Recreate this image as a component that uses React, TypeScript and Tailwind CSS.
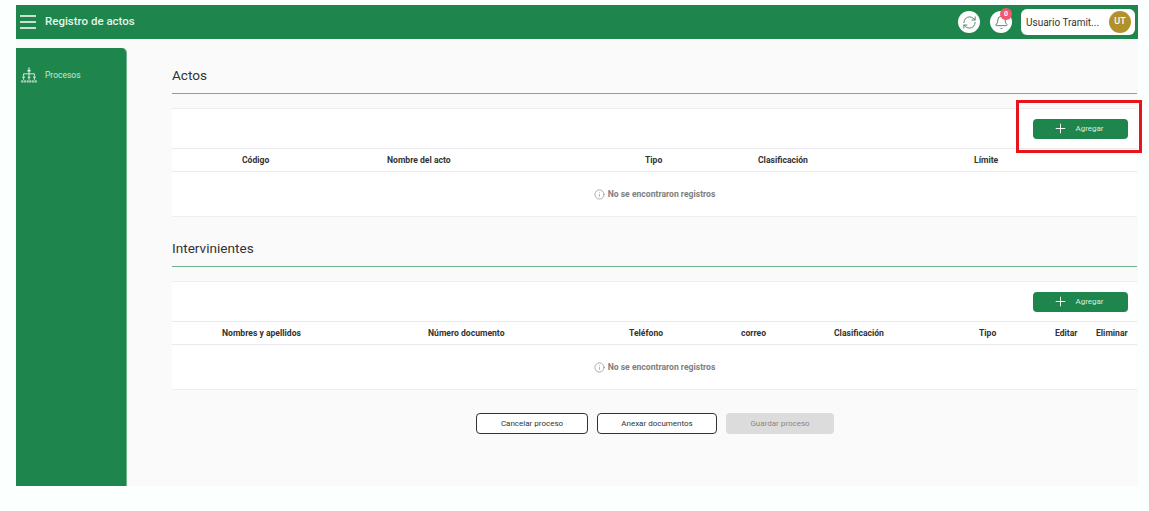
import { Bell, Info, Plus, RefreshCw } from 'lucide-react';

const actosCols = ['Código', 'Nombre del acto', 'Tipo', 'Clasificación', 'Límite'];
const intervCols = ['Nombres y apellidos', 'Número documento', 'Teléfono', 'correo', 'Clasificación', 'Tipo', 'Editar', 'Eliminar'];

function ProcessIcon() {
  return (
    <svg width="16" height="16" viewBox="0 0 16 16" fill="none" stroke="white" strokeWidth="0.8">
      <path d="M8 0.5v1.6" strokeWidth="1" />
      <path d="M6.6 2.6h2.8v2H6.6z" fill="white" stroke="none" />
      <path d="M8 4.6v2.2M2.6 9V6.8h10.8V9M8 6.8V9" />
      <path d="M1.4 9.4h2.4v1.4H1.4zM6.8 9.4h2.4v1.4H6.8zM12.2 9.4h2.4v1.4h-2.4z" fill="white" stroke="none" />
      <path d="M2.6 10.8v2M8 10.8v2M13.4 10.8v2" />
      <path d="M0.6 15.2v-1.5h1.4v1.5zM3.2 15.2v-1.5h1.4v1.5zM6 15.2v-1.5h1.4v1.5zM8.6 15.2v-1.5H10v1.5zM11.4 15.2v-1.5h1.4v1.5zM14 15.2v-1.5h1.4v1.5z" strokeWidth="0.6" />
    </svg>
  );
}

function HamburgerIcon() {
  return (
    <svg width="16" height="14" viewBox="0 0 16 14" stroke="white" strokeWidth="1.4" fill="none">
      <path d="M0 1h16M0 7h16M0 13h16" />
    </svg>
  );
}

function DataCard({ columns, gridClass }: { columns: string[]; gridClass: string }) {
  return (
    <div className="bg-white border-y border-[#eeeeee]">
      <div className="h-[39px] flex items-center justify-end pr-[9px]">
        <button className="w-[95px] h-[20px] rounded-[4px] bg-[#1e864c] flex items-center justify-center gap-[7px] pr-[4px] text-[8px]">
          <Plus className="w-[15px] h-[15px] text-white" strokeWidth={1.5} />
          <span className="text-[#d5eee0]">Agregar</span>
        </button>
      </div>
      <div className={`h-[24px] border-y border-[#e8e8ee] grid items-center text-[8.6px] font-bold text-[#333333] ${gridClass}`}>
        {columns.map((col) => (
          <span key={col}>{col}</span>
        ))}
      </div>
      <div className="h-[44px] flex items-center justify-center gap-[3px] text-[8.6px] font-bold text-[#808080]">
        <Info className="w-[11px] h-[11px] text-[#777777]" strokeWidth={1.25} />
        <span>No se encontraron registros</span>
      </div>
    </div>
  );
}

export default function App() {
  return (
    <div className="relative h-[511px] w-[1149px] overflow-hidden bg-[#fbfffe] pt-[5px] pl-[16px] font-['Roboto',sans-serif]">
      <div className="w-[1122px] h-[481px] flex flex-col">
        {/* Header */}
        <header className="h-[34px] shrink-0 bg-[#1e864c] flex items-center pl-[4px] pr-[3px]">
          <HamburgerIcon />
          <span className="ml-[9px] text-[11.5px] font-medium text-[#e3f5ea]">Registro de actos</span>
          <div className="ml-auto flex items-center">
            <div className="w-[22px] h-[22px] rounded-full bg-white flex items-center justify-center">
              <RefreshCw className="w-[15px] h-[15px] text-[#4f7f62]" strokeWidth={1.5} />
            </div>
            <div className="relative ml-[10px] w-[22px] h-[22px] rounded-full bg-white flex items-center justify-center">
              <Bell className="w-[15px] h-[15px] text-[#4f7f62]" strokeWidth={1.5} />
              <span className="absolute -top-[3px] right-0 w-[12px] h-[12px] rounded-full bg-[#f2596b] text-white text-[7px] font-bold leading-[12px] text-center">0</span>
            </div>
            <div className="ml-[9px] w-[114px] h-[26px] rounded-[6px] bg-white flex items-center justify-between pl-[5px] pr-[4px]">
              <span className="text-[10px] text-[#333333] whitespace-nowrap">Usuario Tramit...</span>
              <span className="w-[22px] h-[22px] rounded-full bg-[#b0912c] text-white text-[9px] font-medium flex items-center justify-center">UT</span>
            </div>
          </div>
        </header>

        <div className="flex-1 flex bg-[#fafafa] min-h-0">
          {/* Sidebar */}
          <aside className="w-[111px] mt-[9px] shrink-0 bg-[#1e864c] rounded-tr-[5px] border-r border-[#6fb38d] pt-[19px] pl-[5px]">
            <div className="flex items-center gap-[8px]">
              <ProcessIcon />
              <span className="text-[8.5px] text-[#c9e8d5]">Procesos</span>
            </div>
          </aside>

          {/* Content */}
          <main className="flex-1 pl-[45px] pr-[1px]">
            <h2 className="mt-[27px] h-[19px] leading-[19px] text-[13.6px] text-[#333333]">Actos</h2>
            <div className="mt-[8px] h-px bg-[#6fb38d]" />
            <div className="mt-[14px]">
              <DataCard columns={actosCols} gridClass="pl-[70px] grid-cols-[145px_258px_113px_216px_1fr]" />
            </div>

            <h2 className="mt-[22px] h-[19px] leading-[19px] text-[13.6px] text-[#333333]">Intervinientes</h2>
            <div className="mt-[8px] h-px bg-[#6fb38d]" />
            <div className="mt-[14px]">
              <DataCard columns={intervCols} gridClass="pl-[50px] grid-cols-[206px_201px_112px_93px_145px_76px_41px_1fr]" />
            </div>

            <div className="mt-[23px] ml-[304px] flex items-center gap-[9px] text-[8px]">
              <button className="w-[112px] h-[21px] rounded-[4px] border border-[#333333] bg-white text-[#333333]">Cancelar proceso</button>
              <button className="w-[120px] h-[21px] rounded-[4px] border border-[#333333] bg-white text-[#333333]">Anexar documentos</button>
              <button className="w-[108px] h-[21px] rounded-[4px] bg-[#dcdcdc] text-[#888888]">Guardar proceso</button>
            </div>
          </main>
        </div>
      </div>

      {/* Red highlight over the first add button */}
      <div className="absolute left-[1016px] top-[100px] w-[126px] h-[53px] border-[3px] border-[#e8141c]" />
    </div>
  );
}
